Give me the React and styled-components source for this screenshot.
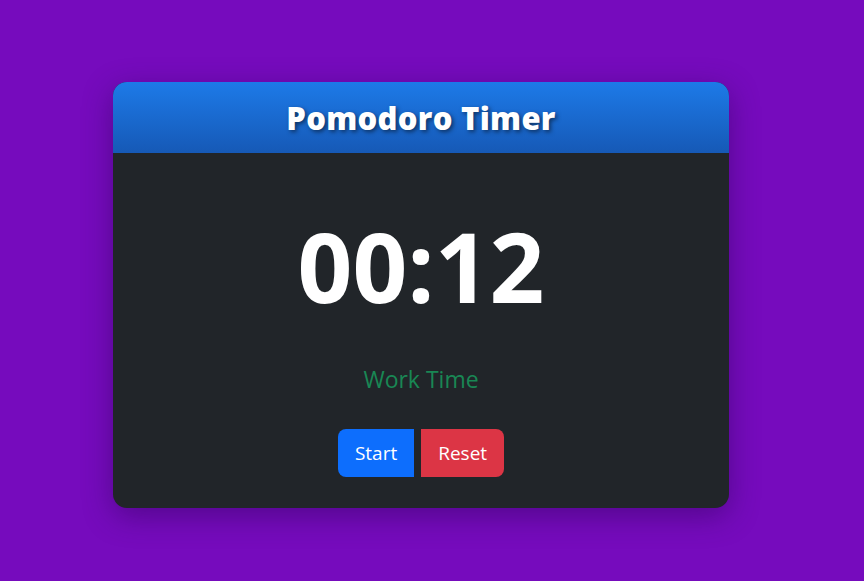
import React from "react";
import styled, { createGlobalStyle } from "styled-components";

const Global = createGlobalStyle`
  html, body { margin: 0; padding: 0; }
  body {
    background: #760bbd;
    font-family: "Open Sans", "Noto Sans", sans-serif;
    min-height: 581px;
  }
`;

const Page = styled.div`
  display: flex;
  justify-content: center;
  padding: 82px 22px 0 0;
`;

const Card = styled.div`
  width: 616px;
  background: #212529;
  border-radius: 14px;
  overflow: hidden;
  box-shadow: 0 8px 30px rgba(40, 0, 80, 0.45);
`;

const Header = styled.div`
  height: 71px;
  display: flex;
  align-items: center;
  justify-content: center;
  background: linear-gradient(180deg, #1d7ae8 0%, #1659b6 100%);
`;

const Title = styled.h1`
  margin: 0;
  color: #fff;
  font-size: 31px;
  font-weight: 800;
  letter-spacing: 0.3px;
  text-shadow: 2px 2px 4px rgba(0, 0, 0, 0.5);
`;

const Body = styled.div`
  display: flex;
  flex-direction: column;
  align-items: center;
  padding: 65px 0 31px;
`;

const Time = styled.div`
  color: #fff;
  font-size: 96px;
  font-weight: 700;
  line-height: 1;
`;

const Mode = styled.div`
  margin-top: 52px;
  color: #198754;
  font-size: 23px;
  line-height: 1.2;
`;

const Buttons = styled.div`
  display: flex;
  gap: 7px;
  margin-top: 35px;
`;

const Btn = styled.button`
  height: 48px;
  padding: 0 ${(p) => p.$px}px;
  border: none;
  color: #fff;
  font-family: inherit;
  font-size: 19px;
  background: ${(p) => p.$bg};
  border-radius: ${(p) => p.$radius};
  cursor: pointer;
`;

export default function App() {
  return (
    <>
      <Global />
      <Page>
        <Card>
          <Header>
            <Title>Pomodoro Timer</Title>
          </Header>
          <Body>
            <Time>00:12</Time>
            <Mode>Work Time</Mode>
            <Buttons>
              <Btn $bg="#0d6efd" $px={17} $radius="8px 0 0 8px">Start</Btn>
              <Btn $bg="#dc3545" $px={17} $radius="0 8px 8px 0">Reset</Btn>
            </Buttons>
          </Body>
        </Card>
      </Page>
    </>
  );
}
